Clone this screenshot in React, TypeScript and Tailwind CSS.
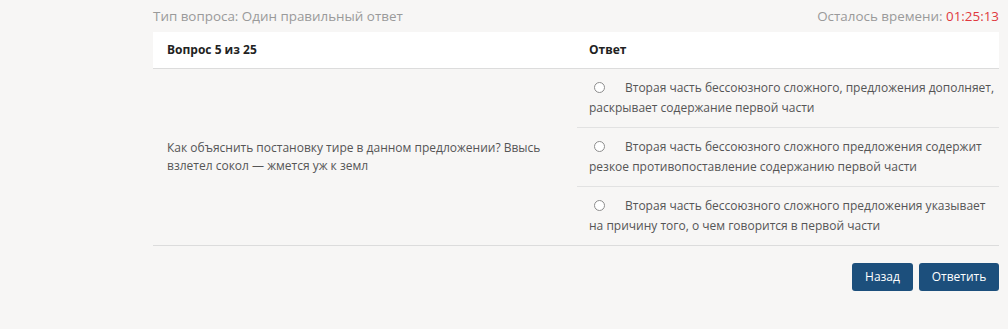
import React from "react";

const answers = [
  {
    first: "Вторая часть бессоюзного сложного, предложения дополняет,",
    rest: "раскрывает содержание первой части",
  },
  {
    first: "Вторая часть бессоюзного сложного предложения содержит",
    rest: "резкое противопоставление содержанию первой части",
  },
  {
    first: "Вторая часть бессоюзного сложного предложения указывает",
    rest: "на причину того, о чем говорится в первой части",
  },
];

export default function App() {
  return (
    <div className="h-[329px] w-full bg-[#f7f6f5] font-['Open_Sans',sans-serif]">
      <div className="ml-[153px] w-[846px]">
        <div className="flex h-[32px] items-center justify-between text-[13.4px] text-[#9a9a9a]">
          <span>Тип вопроса: Один правильный ответ</span>
          <span>
            Осталось времени: <span className="text-[#e0393e]">01:25:13</span>
          </span>
        </div>

        <div className="grid grid-cols-[424px_1fr] border-b border-[#dcdcdc] bg-white text-[12px] font-bold text-[#222]">
          <div className="flex h-[36px] items-center px-[14px]">Вопрос 5 из 25</div>
          <div className="flex h-[36px] items-center px-[12px]">Ответ</div>
        </div>

        <div className="grid grid-cols-[424px_1fr] border-b border-[#dcdcdc] text-[12px] text-[#555]">
          <div className="flex items-center px-[14px] leading-[18px]">
            <p>
              Как объяснить постановку тире в данном предложении? Ввысь
              <br />
              взлетел сокол — жмется уж к земл
            </p>
          </div>
          <div className="flex flex-col">
            {answers.map((a, i) => (
              <label
                key={i}
                className={`block pl-[12px] pr-[4px] py-[9px] leading-[20px] ${
                  i < answers.length - 1 ? "border-b border-[#e2e2e2]" : ""
                }`}
              >
                <span className="block whitespace-nowrap">
                  <span className="ml-[5px] mr-[20px] inline-block h-[11px] w-[11px] rounded-full border border-[#8d8d8d] bg-white align-[-1px]" />
                  {a.first}
                </span>
                {a.rest}
              </label>
            ))}
          </div>
        </div>

        <div className="mt-[17px] flex justify-end gap-[6px] text-[12px] text-white">
          <button className="h-[28px] w-[61px] rounded-[3px] bg-[#1c4f7c]">Назад</button>
          <button className="h-[28px] w-[80px] rounded-[3px] bg-[#1c4f7c]">Ответить</button>
        </div>
      </div>
    </div>
  );
}
